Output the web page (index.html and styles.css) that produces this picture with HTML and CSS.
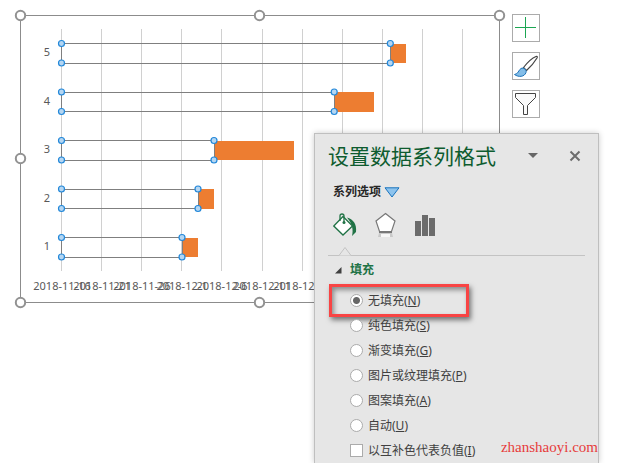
FILE: index.html
```
<!DOCTYPE html>
<html lang="zh-CN">
<head>
<meta charset="utf-8">
<title>设置数据系列格式</title>
<link rel="stylesheet" href="styles.css">
</head>
<body>
<main class="workspace">
  <svg class="chart" width="494" height="300" viewBox="14 9 494 300" role="img" aria-label="甘特图">
    <path class="frame" d="M20.5 15.5H499.5V302.5H20.5Z"/>
    <path class="grid" d="M61.5 29V271M101.5 29V271M141.5 29V271M181.5 29V271M221.5 29V271M262.5 29V271M302.5 29V271M342.5 29V271M382.5 29V271M422.5 29V271M462.5 29V271"/>
    <g class="bars">
      <path d="M390 44h16v19h-16zM334 92h40v20h-40zM214 141h80v19h-80zM198 189h16v20h-16zM182 238h16v19h-16z"/>
    </g>
    <path class="series" d="M61.5 43.5H390.5V63.5H61.5ZM61.5 92.5H334.5V111.5H61.5ZM61.5 140.5H214.5V160.5H61.5ZM61.5 189.5H198.5V208.5H61.5ZM61.5 237.5H182.5V257.5H61.5Z"/>
    <g class="points">
      <circle cx="61.5" cy="43.5" r="3"/><circle cx="61.5" cy="63" r="3"/><circle cx="390.3" cy="43.5" r="3"/><circle cx="390.3" cy="63" r="3"/>
      <circle cx="61.5" cy="92" r="3"/><circle cx="61.5" cy="111.5" r="3"/><circle cx="334.2" cy="92" r="3"/><circle cx="334.2" cy="111.5" r="3"/>
      <circle cx="61.5" cy="140.5" r="3"/><circle cx="61.5" cy="160" r="3"/><circle cx="214" cy="140.5" r="3"/><circle cx="214" cy="160" r="3"/>
      <circle cx="61.5" cy="189" r="3"/><circle cx="61.5" cy="208.5" r="3"/><circle cx="198" cy="189" r="3"/><circle cx="198" cy="208.5" r="3"/>
      <circle cx="61.5" cy="237.5" r="3"/><circle cx="61.5" cy="257" r="3"/><circle cx="182" cy="237.5" r="3"/><circle cx="182" cy="257" r="3"/>
    </g>
    <g class="axis">
      <text x="47" y="56">5</text><text x="47" y="105">4</text><text x="47" y="153">3</text><text x="47" y="202">2</text><text x="47" y="250">1</text>
      <text x="62" y="290">2018-11-16</text><text x="102" y="290">2018-11-21</text><text x="142" y="290">2018-11-26</text><text x="182" y="290">2018-12-1</text><text x="222" y="290">2018-12-6</text><text x="262" y="290">2018-12-11</text><text x="302" y="290">2018-12-16</text>
    </g>
    <g class="handles">
      <circle cx="20.5" cy="15.5" r="4.7"/><circle cx="259.5" cy="15.5" r="4.7"/><circle cx="499.5" cy="15.5" r="4.7"/>
      <circle cx="20.5" cy="158.5" r="4.7"/><circle cx="20.5" cy="302.5" r="4.7"/><circle cx="259.5" cy="302.5" r="4.7"/>
    </g>
  </svg>
  <div class="tools">
    <button class="tool" type="button" aria-label="图表元素">
      <svg width="26" height="26" viewBox="0 0 26 26"><path d="M2 12.5H23M12.5 2V23" stroke="#1ca653"/></svg>
    </button>
    <button class="tool" type="button" aria-label="图表样式">
      <svg width="26" height="26" viewBox="0 0 26 26"><path d="M10.5 14.5C14 10 18 5.5 23 3.5C24.5 3 24.5 4 24 5C21 10 17.5 14 13.5 17.5Z" fill="#fff" stroke="#444" stroke-width="1.2"/><path d="M1.5 21.5C5.5 21 5 17.5 8 15.5C10.5 14 14 17 13 19.5C11.5 24 5.5 24.5 1.5 21.5Z" fill="#83bde8" stroke="#1e73b8"/></svg>
    </button>
    <button class="tool" type="button" aria-label="图表筛选器">
      <svg width="26" height="26" viewBox="0 0 26 26"><path d="M2.5 2.5H22.5V6.5L14.5 14.5V23.5H10.5V14.5L2.5 6.5Z" fill="#fafafa" stroke="#444"/></svg>
    </button>
  </div>

  <aside class="panel">
    <header class="panel-head">
      <h1>设置数据系列格式</h1>
      <button class="plain" type="button" aria-label="任务窗格选项"><svg width="10" height="6" viewBox="0 0 10 6"><path d="M0 0H10L5 5Z" fill="#666"/></svg></button>
      <button class="plain" type="button" aria-label="关闭"><svg width="12" height="12" viewBox="0 0 12 12"><path d="M1.5 1.5L10.5 10.5M10.5 1.5L1.5 10.5" stroke="#6d6d6d" stroke-width="2"/></svg></button>
    </header>
    <button class="options plain" type="button">系列选项<svg width="16" height="11" viewBox="0 0 16 11"><path d="M1 .8H15L8 10Z" fill="#8dc3ed" stroke="#1873bd"/></svg></button>
    <nav class="tabs">
      <button class="plain" type="button" aria-label="填充与线条"><svg width="24" height="24" viewBox="0 0 24 24"><path d="M14 4.5C20 6 24 11 23 19L19 23C20.5 17 19.5 11 14 4.5Z" fill="#217346"/><path d="M.8 13L10 3.5L19.5 13L10 22Z" fill="#fff" stroke="#217346" stroke-width="1.3"/><path d="M7 8V3Q7 1 9 1Q11 1 11 3V9" fill="none" stroke="#217346" stroke-width="1.3"/><circle cx="11" cy="9.5" r="1.5" fill="#217346"/></svg></button>
      <button class="plain" type="button" aria-label="效果"><svg width="24" height="26" viewBox="0 0 24 26"><path d="M5 21H18L19 25H4Z" fill="#c9c9c9"/><path d="M7 22H16V25H7Z" fill="#f6f6f6"/><path d="M11.5 1.5L21 9L17.5 19.5H5.5L2 9Z" fill="#fff" stroke="#777" stroke-width="1.2"/><path d="M5 20H18" stroke="#777" stroke-width="2"/></svg></button>
      <button class="plain" type="button" aria-label="系列选项"><svg width="22" height="22" viewBox="0 0 22 22"><path d="M0 7H6V22H0ZM7 1H13V22H7ZM14 4H20V22H14Z" fill="#6b6b6b"/></svg></button>
    </nav>
    <div class="divider"><svg width="14" height="10" viewBox="0 0 14 10"><path d="M0 9.5H1L7 1.5L13 9.5H14" fill="#e6e6e6" stroke="#c3c3c3"/></svg></div>
    <section>
      <h2><svg width="7" height="7" viewBox="0 0 7 7"><path d="M6.5 0V6.5H0Z" fill="#404040"/></svg>填充</h2>
      <form class="choices">
        <label class="marked"><input type="radio" name="fill" checked><span>无填充(<u>N</u>)</span></label>
        <label><input type="radio" name="fill"><span>纯色填充(<u>S</u>)</span></label>
        <label><input type="radio" name="fill"><span>渐变填充(<u>G</u>)</span></label>
        <label><input type="radio" name="fill"><span>图片或纹理填充(<u>P</u>)</span></label>
        <label><input type="radio" name="fill"><span>图案填充(<u>A</u>)</span></label>
        <label><input type="radio" name="fill"><span>自动(<u>U</u>)</span></label>
        <label><input type="checkbox"><span>以互补色代表负值(<u>I</u>)</span></label>
      </form>
    </section>
    <p class="watermark">zhanshaoyi.com</p>
  </aside>
</main>
</body>
</html>
```
FILE: styles.css
```
* { box-sizing: border-box; }

body {
  margin: 0;
  background: #fff;
  color: #404040;
  font: 12px/16px "Noto Sans", "Noto Sans CJK SC", sans-serif;
}

.workspace {
  position: relative;
  display: flex;
  align-items: flex-start;
  gap: 4px;
  min-height: 100vh;
  padding: 9px 14px 0;
  overflow: hidden;
}

.chart { flex: none; }
.frame { fill: #fff; stroke: #8c8c8c; }
.grid { fill: none; stroke: #d0d0d0; }
.bars { fill: #ed7d31; }
.series { fill: none; stroke: #7f7f7f; }
.points { fill: #b5d6f2; stroke: #2388d9; stroke-width: 1.2px; }
.axis { fill: #595959; font-size: 11px; text-anchor: middle; }
.handles { fill: #fff; stroke: #929292; stroke-width: 2px; }

.tools {
  display: flex;
  flex-direction: column;
  gap: 10px;
  padding-top: 5px;
}

.tool {
  width: 28px;
  height: 28px;
  padding: 0;
  border: 1px solid #ababab;
  background: #fff;
}

.tool svg, .plain svg { display: block; fill: none; }

.plain {
  padding: 0;
  border: 0;
  background: none;
  color: inherit;
  font: inherit;
}

.panel {
  position: absolute;
  top: 133px;
  right: 20px;
  bottom: 0;
  width: 285px;
  padding: 7px 13px 0;
  border: 1px solid #bfbfbf;
  border-bottom: 0;
  background: #e6e6e6;
  box-shadow: 0 0 6px rgba(0, 0, 0, .2);
}

.panel-head {
  display: flex;
  align-items: center;
  height: 30px;
  padding-right: 4px;
}

h1 {
  flex: 1;
  margin: 0;
  color: #0e5c2f;
  font-size: 21px;
  font-weight: 400;
  line-height: 30px;
}

.panel-head .plain + .plain { margin-left: 31px; }

.options {
  display: flex;
  align-items: center;
  gap: 3px;
  margin: 13px 0 0 5px;
  color: #262626;
  font-weight: 700;
}

.tabs {
  display: flex;
  align-items: center;
  gap: 17px;
  height: 26px;
  margin: 12px 0 0 5px;
}

.divider {
  height: 10px;
  margin-top: 8px;
  padding-left: 10px;
  border-bottom: 1px solid #c3c3c3;
}

.divider svg { display: block; }

h2 {
  display: flex;
  align-items: center;
  gap: 8px;
  margin: 6px 0 6px 7px;
  color: #217346;
  font-size: 12px;
  line-height: 16px;
}

.choices { display: flex; flex-direction: column; }

.choices label {
  display: flex;
  align-items: center;
  gap: 5px;
  height: 25px;
  padding-left: 22px;
}

.choices .marked {
  width: 140px;
  height: 33px;
  margin: 0 0 -4px 1px;
  padding-left: 18px;
  border: 3px solid #f84444;
  box-shadow: 2px 3px 5px rgba(0, 0, 0, .5), inset 2px 3px 5px rgba(0, 0, 0, .4);
}

input {
  appearance: none;
  width: 13px;
  height: 13px;
  margin: 0;
  border: 1px solid #ababab;
  background: #fff;
}

input[type="radio"] { border-radius: 50%; }
input[type="radio"]:checked { background: radial-gradient(circle, #666 0 3px, #fff 4px); }

.watermark {
  position: absolute;
  right: 0;
  bottom: 6px;
  margin: 0;
  color: #e63c3c;
  font: 15px/20px "Liberation Serif", serif;
}
```
